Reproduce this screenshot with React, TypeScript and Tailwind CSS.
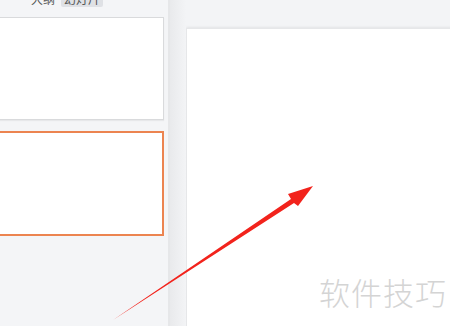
import React from "react";

export default function App() {
  return (
    <div
      className="relative w-[450px] h-[326px] overflow-hidden flex bg-[#f3f4f6]"
      style={{ fontFamily: '"Noto Sans CJK SC", "Noto Sans", sans-serif' }}
    >
      {/* Left thumbnails panel */}
      <div className="w-[168px] h-full bg-[#f4f5f7] flex flex-col overflow-hidden shrink-0">
        <div className="h-[7px] overflow-hidden relative">
          <div className="flex items-end gap-[6px] pl-[31px] -mt-[9px]">
            <span className="text-[12px] leading-[16px] text-[#555]">大纲</span>
            <span className="text-[12px] leading-[16px] text-[#555] bg-[#dfe1e5] px-[3px] rounded-[2px]">幻灯片</span>
          </div>
        </div>
        <div className="h-[10px]" />
        <div className="-ml-[6px] w-[170px] h-[103px] bg-white border border-solid border-[#d9dadc] shadow-[0_1px_1px_rgba(0,0,0,0.05)]" />
        <div className="h-[11px]" />
        <div className="-ml-[6px] w-[170px] h-[105px] bg-white border-2 border-solid border-[#ec8450]" />
      </div>
      {/* divider */}
      <div className="w-[2px] h-full bg-[#e6e7e9] shrink-0" />
      <div className="w-[16px] h-full shrink-0 bg-gradient-to-r from-[#e9eaec] to-[#f3f4f6]" />
      {/* Main editing area */}
      <div className="flex-1 h-full pt-[28px] overflow-hidden">
        <div className="w-[300px] h-[320px] bg-white shadow-[0_0_3px_rgba(0,0,0,0.12)] border-t border-l border-solid border-[#e6e7e9]" />
      </div>

      {/* Watermark */}
      <div className="absolute left-[319px] top-[272px] text-[31px] leading-[40px] tracking-[1px] text-[#d4d4d4] font-light">
        软件技巧
      </div>

      {/* Red arrow annotation */}
      <svg className="absolute left-0 top-0" width="450" height="326" viewBox="0 0 450 326">
        <polygon points="113,320 291,199 288,194 313,186 298,206 294,203" fill="#f2231c" />
      </svg>
    </div>
  );
}
